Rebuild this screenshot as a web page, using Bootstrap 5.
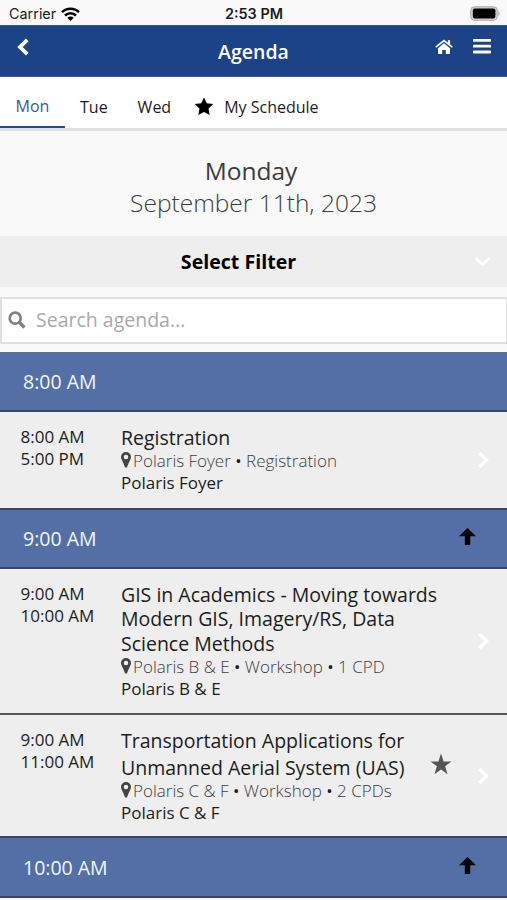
<!DOCTYPE html>
<html lang="en">
<head>
<meta charset="utf-8">
<meta name="viewport" content="width=device-width, initial-scale=1">
<title>Agenda</title>
<link href="https://cdn.jsdelivr.net/npm/bootstrap@5.3.0/dist/css/bootstrap.min.css" rel="stylesheet">
<style>
body{font-family:"Open Sans","Noto Sans",sans-serif;background:#f9f9f9;color:#1c1c1c;height:900px;overflow:hidden}
svg{display:block;flex:none}
.status{height:25px;font:14.4px/27px Inter,"Liberation Sans",sans-serif;padding:0 8px 0 9px;display:grid;grid-template-columns:1fr auto 1fr}
.status .battery{margin-right:-2px}
.topbar{height:52px;background:#1c4287;border-top:1px solid #34569a;border-bottom:1px solid #34569a;color:#fff;padding:0 16px}
.topbar h1{font-size:19.5px;font-weight:600;line-height:51px;margin:0}
.topbar .side{width:64px;height:41px}
.topbar .burger{margin-left:20px}
.tabs{height:54px;background:#fff;border-bottom:3px solid #e2e2e2;font-size:16px;line-height:60px}
.tabs .nav-link{padding:0;color:#1c1c1c;white-space:nowrap}
.tabs .tab-on{width:65px;height:51px;color:#3558a0;border-bottom:2px solid #27498f;line-height:58px}
.tabs .tab-tue{margin-left:15px}
.tabs .tab-wed{margin-left:30px}
.tabs .tab-mine{margin-left:23px;height:60px}
.tabs .tab-mine svg{margin-right:10px}
.day{height:105px;padding-top:24.4px;font-size:24.5px;line-height:32px;color:#3c3c3c}
.day .weekday{padding-right:5px}
.day .thin{font-weight:300}
.filter{height:51px;background:#eee;color:#000;font-size:19.6px;font-weight:700;padding-left:3px}
.search{height:47px;margin:10px 0 8px;background:#fff;border:solid #dfdfdf;border-width:2px 1px 2px 2px;padding:0 0 2px 6px;font-size:19.5px;color:#a9a9a9}
.search span{margin-left:10px}
.hour{height:60px;background:#546fa6;color:#f2f6ff;font-size:19.5px;border-bottom:2px solid #3a4562;padding:1px 31px 0 23px}
.hour-short{height:59px;padding-top:0}
.slot{background:#eee;border-bottom:2px solid #3a4562;padding:13px 16px 0 21px}
.slot .times{width:100.5px;font-size:17px;line-height:22px;margin:1px 0 0 -.5px}
.slot .what{width:326px;font-size:17px;line-height:22px}
.slot .name{font-size:19.5px;line-height:24.6px;padding-top:.6px}
.slot .loc{color:#3d3d3d;font-weight:300}
.slot .loc svg{margin:-3px 2px 0 0}
.slot .loc b{font-weight:400;color:#1c1c1c}
.slot-a{height:98px}
.slot-a .go{margin-top:26px}
.slot-b{height:146px;border-color:#555}
.slot-b .go{margin-top:50px}
.slot-c{height:123px}
.slot-c .go{margin-top:39px}
.slot-c .fav{margin-top:25px}
.slot-c .what{width:309px}
.slot-c .name{line-height:27px;padding:0;margin:-1px 0}
</style>
</head>
<body>
<header>
  <div class="status">
    <div class="d-flex align-items-center">Carrier
      <svg class="ms-1" width="21" height="16" viewBox="0 0 21 16" fill="none" stroke="#000" stroke-width="2.5"><path d="M2 6.200a12 12 0 0 1 17 0M5 9.500a7.800 7.800 0 0 1 11 0"/><path d="M10.500 15l-3.100-3.200a4.400 4.400 0 0 1 6.200 0z" fill="#000" stroke="none"/></svg>
    </div>
    <strong class="fw-semibold">2:53 PM</strong>
    <div class="d-flex align-items-center justify-content-end">
      <svg class="battery" width="31" height="15" viewBox="0 0 31 15"><rect x=".8" y=".8" width="26.400" height="13.400" rx="3.500" fill="#d4d4d4" stroke="#a8a8a8"/><rect x="2.800" y="2.600" width="22.600" height="9.800" rx="1.800"/><path d="M28.300 5a3 3 0 0 1 0 5z" fill="#a8a8a8"/></svg>
    </div>
  </div>
  <div class="topbar d-flex justify-content-between">
    <div class="side d-flex align-items-center"><svg width="14" height="18" viewBox="0 0 14 18" fill="none" stroke="#fff" stroke-width="3.800"><path d="M11.300 1.800L4 9l7.300 7.200"/></svg></div>
    <h1>Agenda</h1>
    <div class="side d-flex align-items-center justify-content-end">
      <svg width="18" height="16" viewBox="0 0 18 16" fill="#fff"><path d="M3 9.200l6-5 6 5v5.100q0 .7-.7.7h-3.500v-4H7.200v4H3.700Q3 15 3 14.300z"/><path d="M12.900 1.300h2.200v4.200l-2.200-1.700z"/><path d="M.8 8.200L9 1.500l8.200 6.700" fill="none" stroke="#fff" stroke-width="1.700"/></svg>
      <svg class="burger" width="18" height="16" viewBox="0 0 18 16" fill="#fff"><rect y="0" width="18" height="2.800" rx=".7"/><rect y="5.800" width="18" height="2.800" rx=".7"/><rect y="11.600" width="18" height="2.800" rx=".7"/></svg>
    </div>
  </div>
  <nav class="tabs nav flex-nowrap">
    <a class="nav-link tab-on text-center">Mon</a>
    <a class="nav-link tab-tue">Tue</a>
    <a class="nav-link tab-wed">Wed</a>
    <a class="nav-link tab-mine d-flex align-items-center"><svg width="20" height="19" viewBox="0 0 20 19"><path d="M10 0l2.800 5.900 6.500.8-4.800 4.500 1.200 6.500-5.700-3.200-5.700 3.200 1.200-6.500L.7 6.700l6.500-.8z" transform="translate(0 -.6)" fill="#000"/></svg>My Schedule</a>
  </nav>
</header>
<main>
  <div class="day text-center"><div class="weekday">Monday</div><div class="thin">September 11th, 2023</div></div>
  <div class="filter d-flex align-items-center">
    <div class="flex-fill text-center">Select Filter</div>
    <svg class="me-3" width="17" height="12" viewBox="0 0 16 12" fill="none" stroke="#fff" stroke-width="3"><path d="M1 2l7 6.500L15 2"/></svg>
  </div>
  <div class="search d-flex align-items-center">
    <svg width="18" height="18" viewBox="0 0 18 18" fill="none" stroke="#808080"><circle cx="7.200" cy="7.200" r="5.500" stroke-width="2.700"/><path d="M11 11l5.500 5.500" stroke-width="3.200"/></svg>
    <span>Search agenda...</span>
  </div>
  <div class="hour d-flex align-items-center">8:00 AM</div>
  <article class="slot slot-a d-flex">
    <div class="times">8:00 AM<br>5:00 PM</div>
    <div class="what"><div class="name">Registration</div>
      <div class="loc d-flex align-items-center"><svg width="10" height="16" viewBox="0 0 10 16"><path d="M5 0a5 5 0 0 1 5 5c0 2-1.500 4-2.500 6.500Q6.700 13.500 5.900 15.500H4.100Q3.300 13.500 2.500 11.500C1.500 9 0 7 0 5a5 5 0 0 1 5-5zm0 2.700a2.300 2.300 0 1 0 0 4.600 2.300 2.300 0 0 0 0-4.600z" fill="#444" fill-rule="evenodd"/></svg><span>Polaris Foyer <b>•</b> Registration</span></div>
      <div>Polaris Foyer</div></div>
    <svg class="go ms-auto" width="14" height="18" viewBox="0 0 14 18" fill="none" stroke="#fff" stroke-width="3.500"><path d="M2.500 2L9.500 9l-7 7"/></svg>
  </article>
  <div class="hour hour-short d-flex align-items-center justify-content-between">9:00 AM
    <svg class="mb-1" width="17" height="18" viewBox="0 0 17 18"><path d="M8.500 0L17 8.200h-5.800V17H5.800V8.200H0z"/></svg></div>
  <article class="slot slot-b d-flex">
    <div class="times">9:00 AM<br>10:00 AM</div>
    <div class="what"><div class="name">GIS in Academics - Moving towards<br>Modern GIS, Imagery/RS, Data<br>Science Methods</div>
      <div class="loc d-flex align-items-center"><svg width="10" height="16" viewBox="0 0 10 16"><path d="M5 0a5 5 0 0 1 5 5c0 2-1.500 4-2.500 6.500Q6.700 13.500 5.900 15.500H4.100Q3.300 13.500 2.500 11.500C1.500 9 0 7 0 5a5 5 0 0 1 5-5zm0 2.700a2.300 2.300 0 1 0 0 4.600 2.300 2.300 0 0 0 0-4.600z" fill="#444" fill-rule="evenodd"/></svg><span>Polaris B &amp; E <b>•</b> Workshop <b>•</b> 1 CPD</span></div>
      <div>Polaris B &amp; E</div></div>
    <svg class="go ms-auto" width="14" height="18" viewBox="0 0 14 18" fill="none" stroke="#fff" stroke-width="3.500"><path d="M2.500 2L9.500 9l-7 7"/></svg>
  </article>
  <article class="slot slot-c d-flex">
    <div class="times">9:00 AM<br>11:00 AM</div>
    <div class="what"><div class="name">Transportation Applications for<br>Unmanned Aerial System (UAS)</div>
      <div class="loc d-flex align-items-center"><svg width="10" height="16" viewBox="0 0 10 16"><path d="M5 0a5 5 0 0 1 5 5c0 2-1.500 4-2.500 6.500Q6.700 13.500 5.900 15.500H4.100Q3.300 13.500 2.500 11.500C1.500 9 0 7 0 5a5 5 0 0 1 5-5zm0 2.700a2.300 2.300 0 1 0 0 4.600 2.300 2.300 0 0 0 0-4.600z" fill="#444" fill-rule="evenodd"/></svg><span>Polaris C &amp; F <b>•</b> Workshop <b>•</b> 2 CPDs</span></div>
      <div>Polaris C &amp; F</div></div>
    <svg class="fav" width="22" height="22" viewBox="0 0 22 22"><path d="M11 .5l2.600 7.900h7.900l-6.400 4.800 2.500 8L11 16.400l-6.600 4.800 2.500-8L.5 8.400h7.900z" fill="#555"/></svg>
    <svg class="go ms-auto" width="14" height="18" viewBox="0 0 14 18" fill="none" stroke="#fff" stroke-width="3.500"><path d="M2.500 2L9.500 9l-7 7"/></svg>
  </article>
  <div class="hour d-flex align-items-center justify-content-between">10:00 AM
    <svg class="mb-1" width="17" height="18" viewBox="0 0 17 18"><path d="M8.500 0L17 8.200h-5.800V17H5.800V8.200H0z"/></svg></div>
</main>
<script src="https://cdn.jsdelivr.net/npm/bootstrap@5.3.0/dist/js/bootstrap.bundle.min.js"></script>
</body>
</html>
